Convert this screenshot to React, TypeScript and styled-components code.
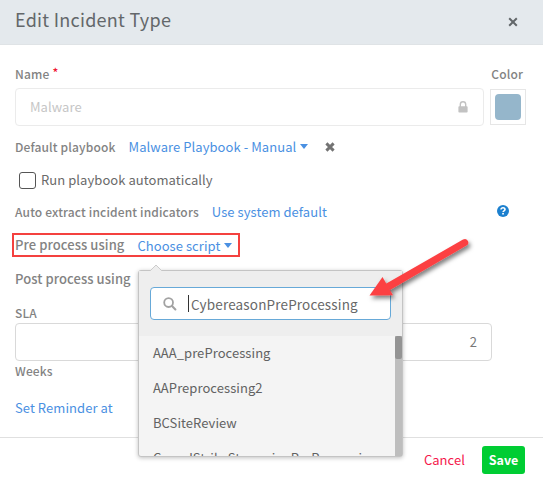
import React from "react";
import styled, { createGlobalStyle } from "styled-components";

const Global = createGlobalStyle`
  * { box-sizing: border-box; }
  body { margin: 0; background: #fff; overflow: hidden; }
`;

const Dialog = styled.div`
  position: relative;
  width: 543px;
  height: 478px;
  display: flex;
  flex-direction: column;
  overflow: hidden;
  font-family: "Noto Sans CJK SC", "Noto Sans", sans-serif;
  font-size: 13px;
  line-height: 20px;
  letter-spacing: 0.06px;
  color: #6a6a6a;
  white-space: nowrap;
`;

const Header = styled.header`
  flex: none;
  height: 45px;
  padding: 0 25px 6px 15px;
  display: flex;
  align-items: center;
  justify-content: space-between;
  background: #e4e9ed;
  border-bottom: 1px solid #dfe3e6;
`;

const Title = styled.h1`
  margin: 0;
  font-size: 18px;
  font-weight: 400;
  line-height: 26px;
  letter-spacing: 0.27px;
  color: #63676a;
`;

const CloseIcon = styled.svg`
  display: block;
  margin-top: 5px;
`;

const Form = styled.main`
  flex: none;
  height: 392px;
  padding: 19px 17px 0 15px;
`;

const Row = styled.div<{ $h: number; $gap?: number; $align?: string }>`
  display: flex;
  align-items: ${(p) => p.$align ?? "center"};
  height: ${(p) => p.$h}px;
  gap: ${(p) => p.$gap ?? 0}px;
`;

const Label = styled.label<{ $large?: boolean }>`
  font-size: ${(p) => (p.$large ? 13 : 12)}px;
  font-weight: 500;
  letter-spacing: ${(p) => (p.$large ? 0.08 : 0.15)}px;
  color: #838383;
`;

const Required = styled.sup`
  font-size: 12px;
  line-height: 10px;
  margin-left: 3px;
  color: #f0142f;
  vertical-align: 2px;
`;

const ColorLabel = styled(Label)`
  margin-left: auto;
  margin-right: 3px;
`;

const Field = styled.div<{ $w: number; $strong?: boolean }>`
  width: ${(p) => p.$w}px;
  height: 38px;
  padding: 0 14px;
  display: flex;
  align-items: center;
  justify-content: space-between;
  border: 1px solid ${(p) => (p.$strong ? "#d9d9d9" : "#ebebeb")};
  border-radius: 4px;
  color: ${(p) => (p.$strong ? "#777" : "#c6c6c6")};
`;

const ColorBox = styled.div`
  width: 36px;
  height: 36px;
  padding: 4px;
  border: 1px solid #e6e6e6;
`;

const Swatch = styled.div`
  width: 26px;
  height: 26px;
  border-radius: 4px;
  background: #95b6cb;
`;

const Link = styled.a<{ $drop?: boolean }>`
  color: #4a90e2;
  display: inline-flex;
  align-items: center;
  padding-top: ${(p) => (p.$drop ? 2 : 0)}px;
`;

const Caret = styled.span`
  margin: 0 0 1px 4px;
  border: 4.5px solid transparent;
  border-top: 5px solid #4a90e2;
  border-bottom: 0;
`;

const Checkbox = styled.span`
  width: 17px;
  height: 17px;
  margin-left: 4px;
  border: 1px solid #555;
  border-radius: 3px;
`;

const HelpIcon = styled.svg`
  display: block;
  margin: 0 17px 2px auto;
`;

const Highlight = styled.div`
  width: 228px;
  height: 24px;
  margin-left: -3px;
  padding-left: 1px;
  display: flex;
  align-items: center;
  gap: 13px;
  border: 2px solid #f4413f;
`;

const Value = styled.span`
  margin-left: auto;
`;

const Footer = styled.footer`
  flex: 1;
  padding: 4px 18px 0 0;
  display: flex;
  align-items: center;
  justify-content: flex-end;
  gap: 17px;
  border-top: 1px solid #e0e0e0;
`;

const Cancel = styled.button`
  border: 0;
  padding: 0;
  background: none;
  font: inherit;
  letter-spacing: inherit;
  color: #f5184c;
`;

const Save = styled.button`
  width: 43px;
  height: 28px;
  padding: 0;
  border: 0;
  border-radius: 3px;
  background: #00cd33;
  font: inherit;
  font-size: 12.5px;
  font-weight: 700;
  color: #fff;
`;

const Popup = styled.div`
  position: absolute;
  left: 138px;
  top: 270px;
  width: 265px;
  height: 187px;
  display: flex;
  flex-direction: column;
  border: 1px solid #c4c4c4;
  border-radius: 3px;
  background: #f4f4f4;
  box-shadow: 0 1px 4px rgba(0, 0, 0, 0.25);
`;

const Pointer = styled.svg`
  position: absolute;
  left: 11px;
  top: -7px;
`;

const SearchArea = styled.div`
  flex: none;
  height: 65px;
  padding: 16px 11px 0;
  background: #eee;
`;

const SearchBox = styled.div`
  height: 33px;
  padding-left: 12px;
  display: flex;
  align-items: center;
  border: 1px solid #67a9d8;
  border-radius: 4px;
  background: #fff;
`;

const TextCursor = styled.span`
  width: 1px;
  height: 17px;
  margin: 0 2px 0 11px;
  background: #333;
`;

const Query = styled.span`
  font-size: 13.5px;
  letter-spacing: 0.16px;
  color: #686868;
`;

const ListArea = styled.div`
  flex: 1;
  display: flex;
  min-height: 0;
  overflow: hidden;
`;

const List = styled.ul`
  flex: 1;
  margin: 0;
  padding: 0 0 0 14px;
  list-style: none;
  color: #626262;
`;

const Item = styled.li`
  height: 35px;
  line-height: 33px;
`;

const Track = styled.div`
  width: 7px;
  background: #bebebe;
`;

const Thumb = styled.div`
  height: 23px;
  border-radius: 2px;
  background: #949494;
`;

const Arrow = styled.svg`
  position: absolute;
  left: 360px;
  top: 230px;
`;

const scripts = [
  "AAA_preProcessing",
  "AAPreprocessing2",
  "BCSiteReview",
  "CrowdStrikeStreamingPreProcessing",
];

export default function App() {
  return (
    <Dialog>
      <Global />
      <Header>
        <Title>Edit Incident Type</Title>
        <CloseIcon width="10" height="10" viewBox="0 0 10 10">
          <path d="M1.2 1.2L8.8 8.8M8.8 1.2L1.2 8.8" stroke="#62676a" strokeWidth="2" />
        </CloseIcon>
      </Header>

      <Form>
        <Row $h={23} $align="flex-start">
          <Label>
            Name<Required>*</Required>
          </Label>
          <ColorLabel>Color</ColorLabel>
        </Row>
        <Row $h={40} $gap={6}>
          <Field $w={469}>
            Malware
            <svg width="12" height="12" viewBox="0 0 12 12">
              <path d="M3.3 6V3.5a2.7 2.7 0 0 1 5.4 0V6" fill="none" stroke="#c2c2c2" strokeWidth="1.4" />
              <rect x="1.4" y="5.2" width="9.2" height="6.3" rx="0.8" fill="#c2c2c2" />
            </svg>
          </Field>
          <ColorBox>
            <Swatch />
          </ColorBox>
        </Row>
        <Row $h={40} $gap={13}>
          <Label>Default playbook</Label>
          <Link>
            Malware Playbook - Manual
            <Caret />
          </Link>
          <svg width="16" height="11" viewBox="-4 0 16 11">
            <path d="M1.4 1.4L8.6 8.6M8.6 1.4L1.4 8.6" stroke="#737373" strokeWidth="2.9" />
          </svg>
        </Row>
        <Row $h={26} $gap={5}>
          <Checkbox />
          <span>Run playbook automatically</span>
        </Row>
        <Row $h={38} $gap={13}>
          <Label>Auto extract incident indicators</Label>
          <Link>Use system default</Link>
          <HelpIcon width="12" height="12" viewBox="0 0 12 12">
            <circle cx="6" cy="6" r="6" fill="#1c80cf" />
            <path d="M4 4.6C4 3.4 4.9 2.8 6 2.8s2 .7 2 1.7c0 1.3-1.9 1.4-1.9 2.6" fill="none" stroke="#fff" strokeWidth="1.6" />
            <rect x="5.2" y="7.9" width="1.7" height="1.6" fill="#fff" />
          </HelpIcon>
        </Row>
        <Row $h={28}>
          <Highlight>
            <Label $large>Pre process using</Label>
            <Link $drop>
              Choose script
              <Caret />
            </Link>
          </Highlight>
        </Row>
        <Row $h={40}>
          <Label $large>Post process using</Label>
        </Row>
        <Row $h={24} $align="flex-end">
          <Label>SLA</Label>
        </Row>
        <Row $h={38}>
          <Field $w={477} $strong>
            <Value>2</Value>
          </Field>
        </Row>
        <Row $h={20}>
          <Label>Weeks</Label>
        </Row>
        <Row $h={53}>
          <Link>Set Reminder at</Link>
        </Row>
      </Form>

      <Footer>
        <Cancel>Cancel</Cancel>
        <Save>Save</Save>
      </Footer>

      <Popup>
        <SearchArea>
          <SearchBox>
            <svg width="14" height="14" viewBox="0 0 14 14">
              <circle cx="5.6" cy="5.6" r="4.4" fill="none" stroke="#a2a2a2" strokeWidth="1.8" />
              <path d="M9 9l3.4 3.4" stroke="#a2a2a2" strokeWidth="2.1" strokeLinecap="round" />
            </svg>
            <TextCursor />
            <Query>CybereasonPreProcessing</Query>
          </SearchBox>
        </SearchArea>
        <ListArea>
          <List>
            {scripts.map((name) => (
              <Item key={name}>{name}</Item>
            ))}
          </List>
          <Track>
            <Thumb />
          </Track>
        </ListArea>
        <Pointer width="12" height="8" viewBox="0 0 12 8">
          <path d="M0 7L6 1l6 6v1H0z" fill="#eee" />
          <path d="M0 7L6 1l6 6" fill="none" stroke="#ccc" />
        </Pointer>
      </Popup>

      <Arrow width="120" height="80" viewBox="0 0 120 80">
        <defs>
          <filter id="shadow" x="-20%" y="-20%" width="140%" height="150%">
            <feDropShadow dx="2" dy="3" stdDeviation="2" floodColor="#000" floodOpacity="0.5" />
          </filter>
        </defs>
        <g filter="url(#shadow)" fill="#fc4143">
          <path d="M25.5 54L103 9.6a3.4 3.4 0 0 1 3.5 6L30 60z" />
          <path d="M9.5 65.5L22.5 47L33 65.2z" />
        </g>
      </Arrow>
    </Dialog>
  );
}
